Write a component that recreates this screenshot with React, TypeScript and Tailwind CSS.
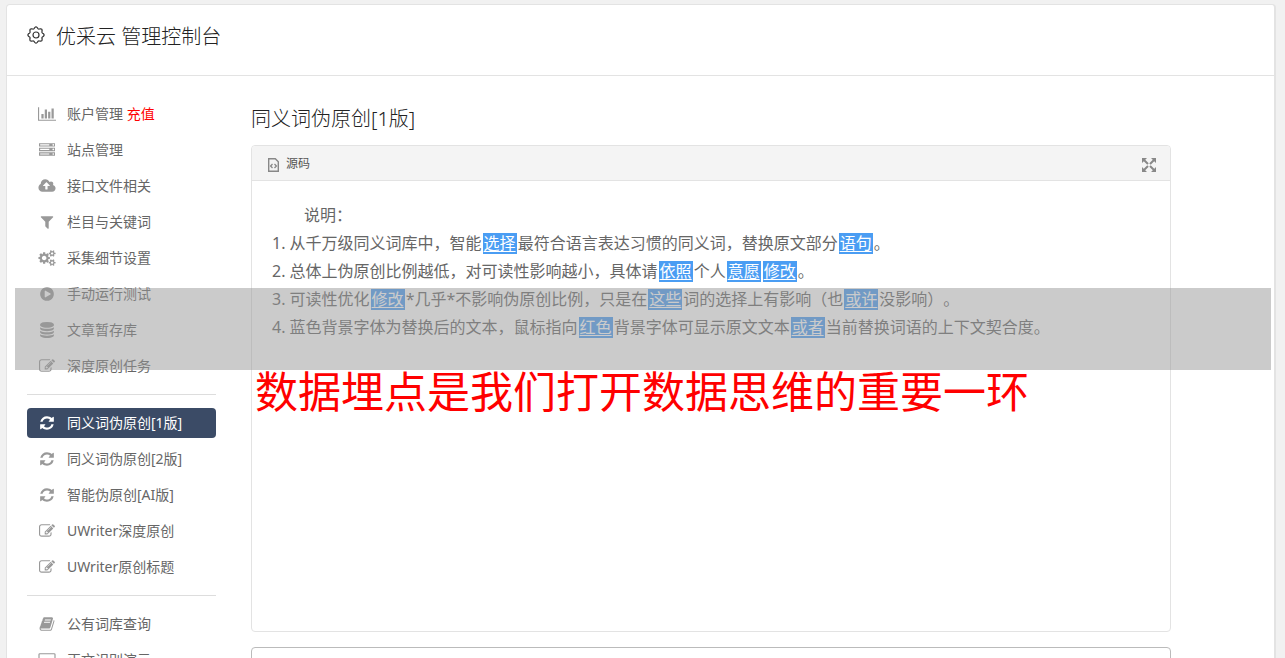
import type { ReactNode } from "react";

const iconPaths = {
    chart: "M640 896v512h-256v-512h256zm384-512v1024h-256v-1024h256zm1024 1152v128h-2048v-1536h128v1408h1920zm-640-896v768h-256v-768h256zm384-384v1152h-256v-1152h256z",
    server: "M128 1408h1024v-128h-1024v128zm0-512h1024v-128h-1024v128zm1568 448q0-40-28-68t-68-28-68 28-28 68 28 68 68 28 68-28 28-68zm-1568-960h1024v-128h-1024v128zm1568 448q0-40-28-68t-68-28-68 28-28 68 28 68 68 28 68-28 28-68zm0-512q0-40-28-68t-68-28-68 28-28 68 28 68 68 28 68-28 28-68zm96 832v384h-1792v-384h1792zm0-512v384h-1792v-384h1792zm0-512v384h-1792v-384h1792z",
    upload: "M1280 864q0-14-9-23l-352-352q-9-9-23-9t-23 9l-351 351q-10 12-10 24 0 14 9 23t23 9h224v352q0 13 9.5 22.5t22.5 9.5h192q13 0 22.5-9.5t9.5-22.5v-352h224q13 0 22.5-9.5t9.5-22.5zm640 288q0 159-112.5 271.5t-271.5 112.5h-1088q-185 0-316.5-131.5t-131.5-316.5q0-130 70-240t188-165q-2-30-2-43 0-212 150-362t362-150q156 0 285.5 87t188.5 231q71-62 166-62 106 0 181 75t75 181q0 76-41 138 130 31 213.5 135.5t83.5 238.5z",
    filter: "M1595 295q17 41-14 70l-493 493v742q0 42-39 59-13 5-25 5-27 0-45-19l-256-256q-19-19-19-45v-486l-493-493q-31-29-14-70 17-39 59-39h1280q42 0 59 39z",
    cogs: "M896 896q0-106-75-181t-181-75-181 75-75 181 75 181 181 75 181-75 75-181zm768 512q0-52-38-90t-90-38-90 38-38 90q0 53 37.5 90.5t90.5 37.5 90.5-37.5 37.5-90.5zm0-1024q0-52-38-90t-90-38-90 38-38 90q0 53 37.5 90.5t90.5 37.5 90.5-37.5 37.5-90.5zm-384 421v185q0 10-7 19.5t-16 10.5l-155 24q-11 35-32 76 34 48 90 115 7 11 7 20 0 12-7 19-23 30-82.5 89.5t-78.5 59.5q-11 0-21-7l-115-90q-37 19-77 31-11 108-23 155-7 24-30 24h-186q-11 0-20-7.5t-10-17.5l-23-153q-34-10-75-31l-118 89q-7 7-20 7-11 0-21-8-144-133-144-160 0-9 7-19 10-14 41-53t47-61q-23-44-35-82l-152-24q-10-1-17-9.5t-7-19.5v-185q0-10 7-19.5t16-10.5l155-24q11-35 32-76-34-48-90-115-7-11-7-20 0-12 7-20 22-30 82-89t79-59q11 0 21 7l115 90q34-18 77-32 11-108 23-154 7-24 30-24h186q11 0 20 7.5t10 17.5l23 153q34 10 75 31l118-89q8-7 20-7 11 0 21 8 144 133 144 160 0 8-7 19-12 16-42 54t-45 60q23 48 34 82l152 23q10 2 17 10.5t7 19.5zm640 533v140q0 16-149 31-12 27-30 52 51 113 51 138 0 4-4 7-122 71-124 71-8 0-46-47t-52-68q-20 2-30 2t-30-2q-14 21-52 68t-46 47q-2 0-124-71-4-3-4-7 0-25 51-138-18-25-30-52-149-15-149-31v-140q0-16 149-31 13-29 30-52-51-113-51-138 0-4 4-7 4-2 35-20t59-34 30-16q8 0 46 46.5t52 67.5q20-2 30-2t30 2q51-71 92-112l6-2q4 0 124 70 4 3 4 7 0 25-51 138 17 23 30 52 149 15 149 31zm0-1024v140q0 16-149 31-12 27-30 52 51 113 51 138 0 4-4 7-122 71-124 71-8 0-46-47t-52-68q-20 2-30 2t-30-2q-14 21-52 68t-46 47q-2 0-124-71-4-3-4-7 0-25 51-138-18-25-30-52-149-15-149-31v-140q0-16 149-31 13-29 30-52-51-113-51-138 0-4 4-7 4-2 35-20t59-34 30-16q8 0 46 46.5t52 67.5q20-2 30-2t30 2q51-71 92-112l6-2q4 0 124 70 4 3 4 7 0 25-51 138 17 23 30 52 149 15 149 31z",
    play: "M896 128q209 0 385.5 103t279.5 279.5 103 385.5-103 385.5-279.5 279.5-385.5 103-385.5-103-279.5-279.5-103-385.5 103-385.5 279.5-279.5 385.5-103zm384 823q32-18 32-55t-32-55l-544-320q-31-19-64-1-32 19-32 56v640q0 37 32 56 16 8 32 8 17 0 32-9z",
    database: "M896 768q237 0 443-43t325-127v170q0 69-103 128t-280 93.5-385 34.5-385-34.5-280-93.5-103-128v-170q119 84 325 127t443 43zm0 768q237 0 443-43t325-127v170q0 69-103 128t-280 93.5-385 34.5-385-34.5-280-93.5-103-128v-170q119 84 325 127t443 43zm0-384q237 0 443-43t325-127v170q0 69-103 128t-280 93.5-385 34.5-385-34.5-280-93.5-103-128v-170q119 84 325 127t443 43zm0-1152q208 0 385 34.5t280 93.5 103 128v128q0 69-103 128t-280 93.5-385 34.5-385-34.5-280-93.5-103-128v-128q0-69 103-128t280-93.5 385-34.5z",
    edit: "M888 1184l116-116-152-152-116 116v56h96v96h56zm440-720q-16-16-33 1l-350 350q-17 17-1 33t33-1l350-350q17-17 1-33zm80 594v190q0 119-84.5 203.5t-203.5 84.5h-832q-119 0-203.5-84.5t-84.5-203.5v-832q0-119 84.5-203.5t203.5-84.5h832q63 0 117 25 15 7 18 23 3 17-9 29l-49 49q-14 14-32 8-23-6-45-6h-832q-66 0-113 47t-47 113v832q0 66 47 113t113 47h832q66 0 113-47t47-113v-126q0-13 9-22l64-64q15-15 35-7t20 29zm-96-738l288 288-672 672h-288v-288zm444 132l-92 92-288-288 92-92q28-28 68-28t68 28l152 152q28 28 28 68t-28 68z",
    refresh: "M1639 1056q0 5-1 7-64 268-268 434.5t-478 166.5q-146 0-282.5-55t-243.5-157l-129 129q-19 19-45 19t-45-19-19-45v-448q0-26 19-45t45-19h448q26 0 45 19t19 45-19 45l-137 137q71 66 161 102t187 36q134 0 250-65t186-179q11-17 53-117 8-23 30-23h192q13 0 22.5 9.5t9.5 22.5zm25-800v448q0 26-19 45t-45 19h-448q-26 0-45-19t-19-45 19-45l138-138q-148-137-349-137-134 0-250 65t-186 179q-11 17-53 117-8 23-30 23h-199q-13 0-22.5-9.5t-9.5-22.5v-7q65-268 270-434.5t480-166.5q146 0 284 55.5t245 156.5l130-129q19-19 45-19t45 19 19 45z",
    book: "M1703 478q40 57 18 129l-275 906q-19 64-76.5 107.5t-122.5 43.5h-923q-77 0-148.5-53.5t-99.5-131.5q-24-67-2-127 0-4 3-27t4-37q1-8-3-21.5t-3-19.5q2-11 8-21t16.5-23.5 16.5-23.5q23-38 45-91.5t30-91.5q3-10 .5-30t-.5-28q3-11 17-28t17-23q21-36 42-92t25-90q1-9-2.5-32t.5-28q4-13 22-30.5t22-22.5q19-26 42.5-84.5t27.5-96.5q1-8-3-25.5t-2-26.5q2-8 9-18t18-23 17-21q8-12 16.5-30.5t15-35 16-36 19.5-32 26.5-23.5 36-11.5 47.5 5.5l-1 3q38-9 51-9h761q74 0 114 56t18 130l-274 906q-36 119-71.5 153.5t-128.5 34.5h-869q-27 0-38 15-11 16-1 43 24 70 144 70h923q29 0 56-15.5t35-41.5l300-987q7-22 5-57 38 15 59 43zm-1064 2q-4 13 2 22.5t20 9.5h608q13 0 25.5-9.5t16.5-22.5l21-64q4-13-2-22.5t-20-9.5h-608q-13 0-25.5 9.5t-16.5 22.5zm-83 256q-4 13 2 22.5t20 9.5h608q13 0 25.5-9.5t16.5-22.5l21-64q4-13-2-22.5t-20-9.5h-608q-13 0-25.5 9.5t-16.5 22.5z",
    screen: "M160 128h1600q66 0 113 47t47 113v960q0 66-47 113t-113 47h-1600q-66 0-113-47t-47-113v-960q0-66 47-113t113-47zm0 128q-32 0-32 32v960q0 32 32 32h1600q32 0 32-32v-960q0-32-32-32z",
};

type IconName = keyof typeof iconPaths;

// wider than the usual square box
const iconBoxes: Partial<Record<IconName, string>> = {
    chart: "0 0 2048 1792",
    upload: "0 0 1920 1792",
    cogs: "0 0 1920 1792",
    screen: "0 0 1920 1792",
};

const SideIcon = ({ name }: { name: IconName }) => (
    <svg viewBox={iconBoxes[name] ?? "0 0 1792 1792"} className="h-4 w-[18px]" fill="currentColor">
        <path d={iconPaths[name]} fillRule={name === "screen" ? "evenodd" : "nonzero"} />
    </svg>
);

interface MenuItem {
    icon: IconName;
    label: string;
    extra?: string;
    active?: boolean;
}

const menu: MenuItem[][] = [
    [
        { icon: "chart", label: "账户管理", extra: "充值" },
        { icon: "server", label: "站点管理" },
        { icon: "upload", label: "接口文件相关" },
        { icon: "filter", label: "栏目与关键词" },
        { icon: "cogs", label: "采集细节设置" },
        { icon: "play", label: "手动运行测试" },
        { icon: "database", label: "文章暂存库" },
        { icon: "edit", label: "深度原创任务" },
    ],
    [
        { icon: "refresh", label: "同义词伪原创[1版]", active: true },
        { icon: "refresh", label: "同义词伪原创[2版]" },
        { icon: "refresh", label: "智能伪原创[AI版]" },
        { icon: "edit", label: "UWriter深度原创" },
        { icon: "edit", label: "UWriter原创标题" },
    ],
    [
        { icon: "book", label: "公有词库查询" },
        { icon: "screen", label: "正文识别演示" },
    ],
];

const Sidebar = () => (
    <nav className="w-[189px] shrink-0">
        {menu.map((group, i) => (
            <ul key={i} className={i > 0 ? "mt-[13px] flex flex-col gap-[6px] border-t border-[#ddd] pt-[13px]" : "flex flex-col gap-[6px]"}>
                {group.map((item) => (
                    <li key={item.label}>
                        <a
                            href="#"
                            className={
                                item.active
                                    ? "flex h-[30px] items-center gap-[11px] rounded bg-[#3b4b66] px-[11px] text-sm text-white"
                                    : "flex h-[30px] items-center gap-[11px] rounded px-[11px] text-sm text-[#666]"
                            }
                        >
                            <span className={item.active ? "text-white" : "text-[#999]"}>
                                <SideIcon name={item.icon} />
                            </span>
                            <span className="whitespace-nowrap">
                                {item.label}
                                {item.extra && <span className="text-[#f00]"> {item.extra}</span>}
                            </span>
                        </a>
                    </li>
                ))}
            </ul>
        ))}
    </nav>
);

const Word = ({ children }: { children: ReactNode }) => (
    <a href="#" className="mx-px inline-block bg-[#4a9df3] px-px leading-[21px] text-white underline underline-offset-2">
        {children}
    </a>
);

const GearIcon = () => {
    const teeth = 8;
    const points = Array.from({ length: 97 }, (_, i) => {
        const a = (i / 96) * Math.PI * 2;
        const r = 7.3 + 0.8 * Math.cos(teeth * a);
        return `${(9 + r * Math.cos(a)).toFixed(2)} ${(9 + r * Math.sin(a)).toFixed(2)}`;
    });
    return (
        <svg viewBox="0 0 18 18" className="h-[18px] w-[18px]" fill="none" stroke="#333" strokeWidth="1.2">
            <path d={`M${points.join("L")}Z`} />
            <circle cx="9" cy="9" r="3" />
        </svg>
    );
};

export default function App() {
    return (
        <div className="min-h-screen bg-[#f1f1f1] pt-1 pr-[9px] pl-[6px] font-['Noto_Sans','Noto_Sans_CJK_SC',sans-serif] text-[#666] [text-spacing-trim:space-all]">
            <div className="h-[calc(100vh-4px)] overflow-hidden rounded-t border border-r-2 border-b-0 border-[#e3e3e3] bg-white">
                <header className="flex h-[71px] gap-[11px] border-b border-[#e3e3e3] pt-4 pl-5">
                    <span className="pt-[5px]">
                        <GearIcon />
                    </span>
                    <h1 className="text-xl leading-8 font-light text-[#222]">优采云 管理控制台</h1>
                </header>

                <div className="flex gap-[35px] pt-[23px] pr-[103px] pl-5">
                    <Sidebar />
                    <main className="min-w-0 flex-1">
                        <h2 className="mt-[5px] mb-[11px] text-xl leading-[30px] font-light text-[#222]">同义词伪原创[1版]</h2>

                        <section className="mb-[15px] min-h-[487px] rounded border border-[#e3e3e3]">
                            <div className="flex h-[35px] items-center justify-between rounded-t border-b border-[#e3e3e3] bg-[#f4f4f4] pr-[14px] pl-4">
                                <button className="flex items-center gap-[7px] pt-[2px] text-xs text-[#555]">
                                    <svg viewBox="0 0 11 14" className="mt-[2px] h-[14px] w-[11px]" fill="none" stroke="#888">
                                        <path strokeWidth="1.4" d="M.7.7h6.600l3 3v9.600H.7z" />
                                        <path strokeWidth="1.3" d="M4.500 6L2.600 8l1.900 2M6.500 6l1.900 2-1.900 2" />
                                    </svg>
                                    源码
                                </button>
                                <button aria-label="全屏" className="mt-1">
                                    <svg viewBox="0 0 14 14" className="h-[14px] w-[14px]" fill="#888" stroke="#888" strokeWidth="2">
                                        <path stroke="none" d="M0 0h5L0 5zM14 0v5L9 0zM0 14V9l5 5zM14 14H9l5-5z" />
                                        <path d="M2 2l4 4M12 2L8 6M2 12l4-4M12 12L8 8" />
                                    </svg>
                                </button>
                            </div>
                            <div className="px-5 pt-5 text-base leading-7">
                                <p className="indent-8">说明：</p>
                                <p>1. 从千万级同义词库中，智能<Word>选择</Word>最符合语言表达习惯的同义词，替换原文部分<Word>语句</Word>。</p>
                                <p>2. 总体上伪原创比例越低，对可读性影响越小，具体请<Word>依照</Word>个人<Word>意愿</Word><Word>修改</Word>。</p>
                                <p>3. 可读性优化<Word>修改</Word>*几乎*不影响伪原创比例，只是在<Word>这些</Word>词的选择上有影响（也<Word>或许</Word>没影响）。</p>
                                <p>4. 蓝色背景字体为替换后的文本，鼠标指向<Word>红色</Word>背景字体可显示原文文本<Word>或者</Word>当前替换词语的上下文契合度。</p>
                            </div>
                        </section>

                        <textarea aria-label="原文" className="block h-40 w-full resize-none rounded border border-[#bbb] p-3" />
                    </main>
                </div>
            </div>

            {/* banner laid over the console */}
            <div className="pointer-events-none absolute top-[288px] right-[14px] left-[15px] h-[82px] bg-[#979797]/50" />
            <p className="pointer-events-none absolute top-[370px] left-[255px] text-[43px] leading-[44px] whitespace-nowrap text-[#f00]">
                数据埋点是我们打开数据思维的重要一环
            </p>
        </div>
    );
}
